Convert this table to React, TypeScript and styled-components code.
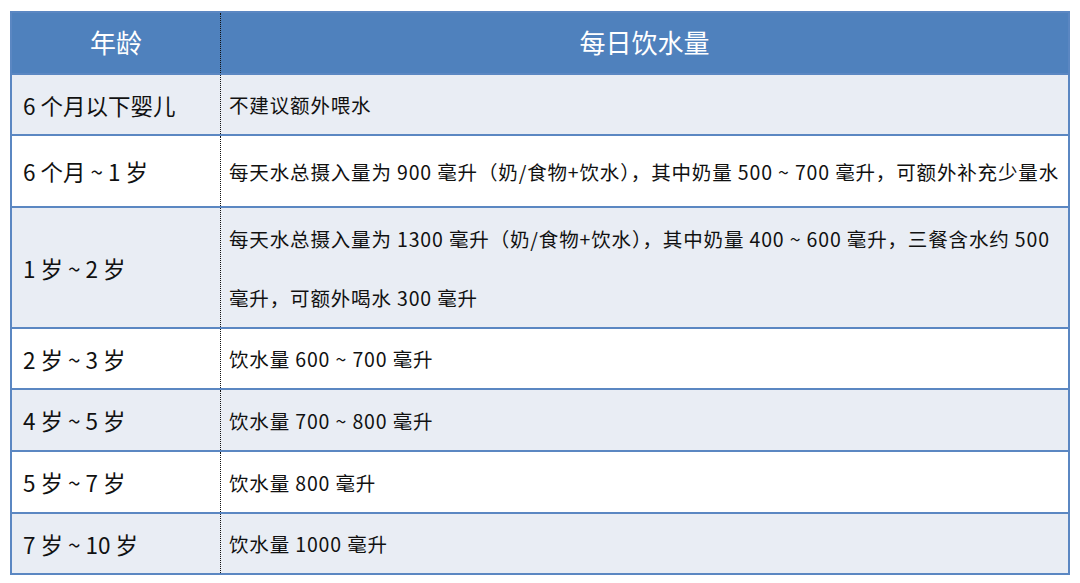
import styled, { createGlobalStyle } from 'styled-components'

const GlobalStyle = createGlobalStyle`
  html, body {
    margin: 0;
    padding: 0;
    background: #fff;
  }
  body {
    font-family: "Noto Sans CJK SC", "Noto Sans", sans-serif;
    color: #111;
  }
`

const Page = styled.div`
  width: 1080px;
  height: 583px;
  padding: 11px 0 0 10px;
  box-sizing: border-box;
`

const Table = styled.table`
  width: 1060px;
  border-collapse: collapse;
  border: 2px solid #5b87c2;
  table-layout: fixed;
`

const HeadCell = styled.th<{ $first?: boolean }>`
  height: 57px;
  padding: 0 0 3px;
  background: #4f81bd;
  color: #fff;
  font-size: 26px;
  font-weight: 400;
  text-align: center;
  border-left: ${p => (p.$first ? 'none' : '1px dotted #111')};
  width: ${p => (p.$first ? '208px' : 'auto')};
`

const Row = styled.tr<{ $light: boolean; $h: number }>`
  height: ${p => p.$h}px;
  background: ${p => (p.$light ? '#e9edf4' : '#ffffff')};
  border-top: 2px solid #5b87c2;
`

const AgeCell = styled.td`
  padding: 0 0 0 11px;
  font-size: 22.5px;
  white-space: nowrap;
`

const AmountCell = styled.td`
  padding: 0 0 0 8px;
  font-size: 19.5px;
  letter-spacing: 0.85px;
  line-height: 59px;
  border-left: 1px dotted #111;
`

const Line = styled.span`
  display: block;
  white-space: nowrap;
`

const rows = [
  { age: '6 个月以下婴儿', lines: ['不建议额外喂水'], h: 59 },
  { age: '6 个月 ~ 1 岁', lines: ['每天水总摄入量为 900 毫升（奶/食物+饮水），其中奶量 500 ~ 700 毫升，可额外补充少量水'], h: 72 },
  {
    age: '1 岁 ~ 2 岁',
    lines: ['每天水总摄入量为 1300 毫升（奶/食物+饮水），其中奶量 400 ~ 600 毫升，三餐含水约 500', '毫升，可额外喝水 300 毫升'],
    h: 121,
  },
  { age: '2 岁 ~ 3 岁', lines: ['饮水量 600 ~ 700 毫升'], h: 61 },
  { age: '4 岁 ~ 5 岁', lines: ['饮水量 700 ~ 800 毫升'], h: 62 },
  { age: '5 岁 ~ 7 岁', lines: ['饮水量 800 毫升'], h: 62 },
  { age: '7 岁 ~ 10 岁', lines: ['饮水量 1000 毫升'], h: 61 },
]

export default function App() {
  return (
    <Page>
      <GlobalStyle />
      <Table>
        <thead>
          <tr>
            <HeadCell $first>年龄</HeadCell>
            <HeadCell>每日饮水量</HeadCell>
          </tr>
        </thead>
        <tbody>
          {rows.map((r, i) => (
            <Row key={r.age} $light={i % 2 === 0} $h={r.h}>
              <AgeCell>{r.age}</AgeCell>
              <AmountCell>
                {r.lines.map(l => (
                  <Line key={l}>{l}</Line>
                ))}
              </AmountCell>
            </Row>
          ))}
        </tbody>
      </Table>
    </Page>
  )
}
